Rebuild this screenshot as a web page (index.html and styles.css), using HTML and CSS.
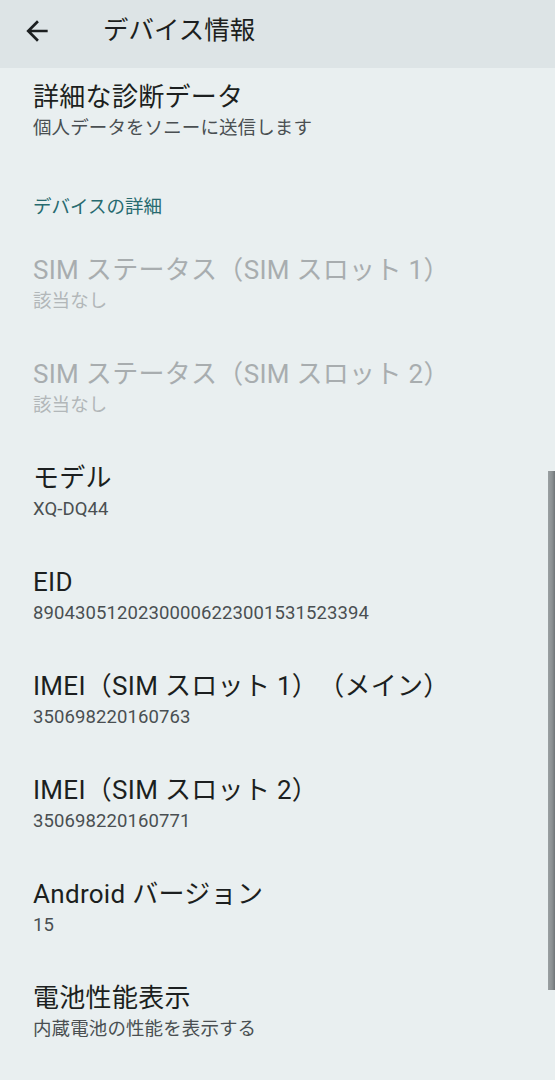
FILE: index.html
```html
<!DOCTYPE html>
<html lang="ja">
<head>
<meta charset="utf-8">
<link rel="stylesheet" href="styles.css">
</head>
<body>
<header class="appbar">
  <svg class="back" viewBox="0 0 24 24" width="32" height="32"><path d="M20 11H7.83l5.59-5.59L12 4l-8 8 8 8 1.41-1.41L7.83 13H20v-2z" fill="#1c1f20"/></svg>
  <div class="appbar-title">デバイス情報</div>
</header>
<main class="list">
  <div class="item first">
    <div class="title">詳細な診断データ</div>
    <div class="sub">個人データをソニーに送信します</div>
  </div>
  <div class="section">デバイスの詳細</div>
  <div class="item disabled">
    <div class="title">SIM ステータス（SIM スロット 1）</div>
    <div class="sub">該当なし</div>
  </div>
  <div class="item disabled">
    <div class="title">SIM ステータス（SIM スロット 2）</div>
    <div class="sub">該当なし</div>
  </div>
  <div class="item">
    <div class="title">モデル</div>
    <div class="sub">XQ-DQ44</div>
  </div>
  <div class="item">
    <div class="title">EID</div>
    <div class="sub">89043051202300006223001531523394</div>
  </div>
  <div class="item">
    <div class="title">IMEI（SIM スロット 1）（メイン）</div>
    <div class="sub">350698220160763</div>
  </div>
  <div class="item">
    <div class="title">IMEI（SIM スロット 2）</div>
    <div class="sub">350698220160771</div>
  </div>
  <div class="item">
    <div class="title">Android バージョン</div>
    <div class="sub">15</div>
  </div>
  <div class="item">
    <div class="title">電池性能表示</div>
    <div class="sub">内蔵電池の性能を表示する</div>
  </div>
</main>
<div class="scrollbar"></div>
</body>
</html>
```
FILE: styles.css
```css
html, body {
  margin: 0;
  padding: 0;
  background: #e9eff0;
  font-family: Roboto, "Noto Sans CJK JP", sans-serif;
  color: #1c1f20;
  overflow: hidden;
  height: 1080px;
  text-spacing-trim: space-all;
}
.appbar {
  height: 68px;
  background: #dde4e6;
  display: flex;
  align-items: center;
}
.back {
  margin-left: 21px;
  margin-top: -6px;
  display: block;
}
.appbar-title {
  margin-left: 50px;
  font-size: 25.5px;
  line-height: 34px;
  margin-top: -8px;
  color: #1c1f20;
}
.list {
  display: flex;
  flex-direction: column;
}
.item {
  padding: 21px 33px;
}
.item.first {
  padding-top: 12px;
}
.title {
  font-size: 26px;
  line-height: 34px;
  letter-spacing: 0.3px;
  color: #1c1f20;
  white-space: nowrap;
}
.sub {
  font-size: 18.5px;
  line-height: 28px;
  letter-spacing: 0.1px;
  color: #4a4f52;
  white-space: nowrap;
}
.disabled .title {
  color: #a8adaf;
}
.disabled .sub {
  color: #b2b7b9;
}
.section {
  padding: 32px 33px 13px;
  font-size: 18.5px;
  line-height: 24px;
  color: #276a6f;
}
.scrollbar {
  position: fixed;
  left: 548px;
  top: 471px;
  width: 7px;
  height: 519px;
  background: linear-gradient(to right, #9aa0a2, #8a9092 60%, #6f7578);
}
```
